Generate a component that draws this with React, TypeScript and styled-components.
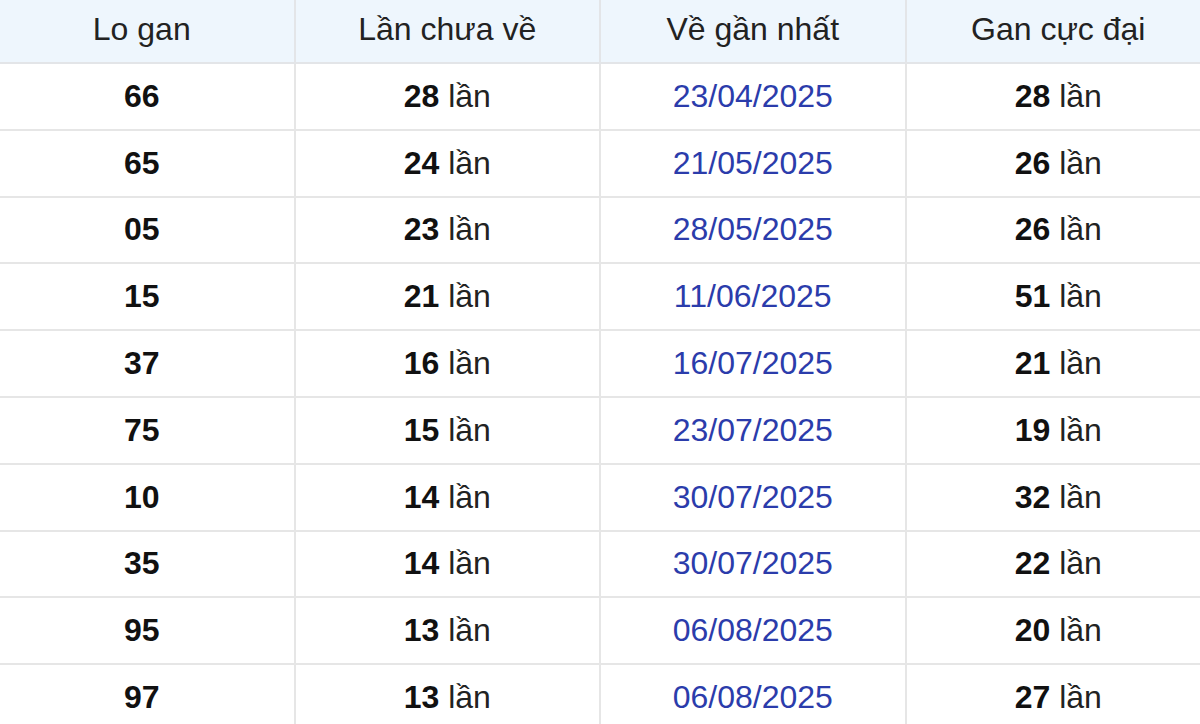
import styled, { createGlobalStyle } from 'styled-components';

const GlobalStyle = createGlobalStyle`
  html, body {
    margin: 0;
    padding: 0;
    background: #ffffff;
    overflow: hidden;
  }
  body {
    font-family: 'Liberation Sans', Arial, sans-serif;
  }
`;

/**  表格外层，左右略微超出视口  */
const Wrapper = styled.div`
  width: 1224px;
  margin-left: -12px;
`;

const Table = styled.table`
  width: 100%;
  border-collapse: collapse;
  table-layout: fixed;
  font-size: 32px;
  color: #111;
`;

const HeadCell = styled.th`
  height: 58px;
  padding: 0 0 4px;
  background: #eef6fd;
  font-weight: 400;
  color: #222;
  text-align: center;
  vertical-align: middle;
  border: 2px solid #e3e5e8;
  border-top: none;
`;

const Cell = styled.td<{ $blue?: boolean }>`
  height: 64.8px;
  padding: 0;
  text-align: center;
  vertical-align: middle;
  border: 2px solid #e6e6e6;
  color: ${p => (p.$blue ? '#2b3cab' : '#111')};
`;

const Num = styled.b`
  font-weight: 700;
`;

const Unit = styled.span`
  font-weight: 400;
  color: #222;
`;

type Row = [string, number, string, number];

const rows: Row[] = [
  ['66', 28, '23/04/2025', 28],
  ['65', 24, '21/05/2025', 26],
  ['05', 23, '28/05/2025', 26],
  ['15', 21, '11/06/2025', 51],
  ['37', 16, '16/07/2025', 21],
  ['75', 15, '23/07/2025', 19],
  ['10', 14, '30/07/2025', 32],
  ['35', 14, '30/07/2025', 22],
  ['95', 13, '06/08/2025', 20],
  ['97', 13, '06/08/2025', 27],
];

function Times({ n }: { n: number }) {
  return (
    <>
      <Num>{n}</Num> <Unit>lần</Unit>
    </>
  );
}

export default function App() {
  return (
    <>
      <GlobalStyle />
      <Wrapper>
        <Table>
          <thead>
            <tr>
              <HeadCell>Lo gan</HeadCell>
              <HeadCell>Lần chưa về</HeadCell>
              <HeadCell>Về gần nhất</HeadCell>
              <HeadCell>Gan cực đại</HeadCell>
            </tr>
          </thead>
          <tbody>
            {rows.map(r => (
              <tr key={r[0]}>
                <Cell>
                  <Num>{r[0]}</Num>
                </Cell>
                <Cell>
                  <Times n={r[1]} />
                </Cell>
                <Cell $blue>{r[2]}</Cell>
                <Cell>
                  <Times n={r[3]} />
                </Cell>
              </tr>
            ))}
          </tbody>
        </Table>
      </Wrapper>
    </>
  );
}
